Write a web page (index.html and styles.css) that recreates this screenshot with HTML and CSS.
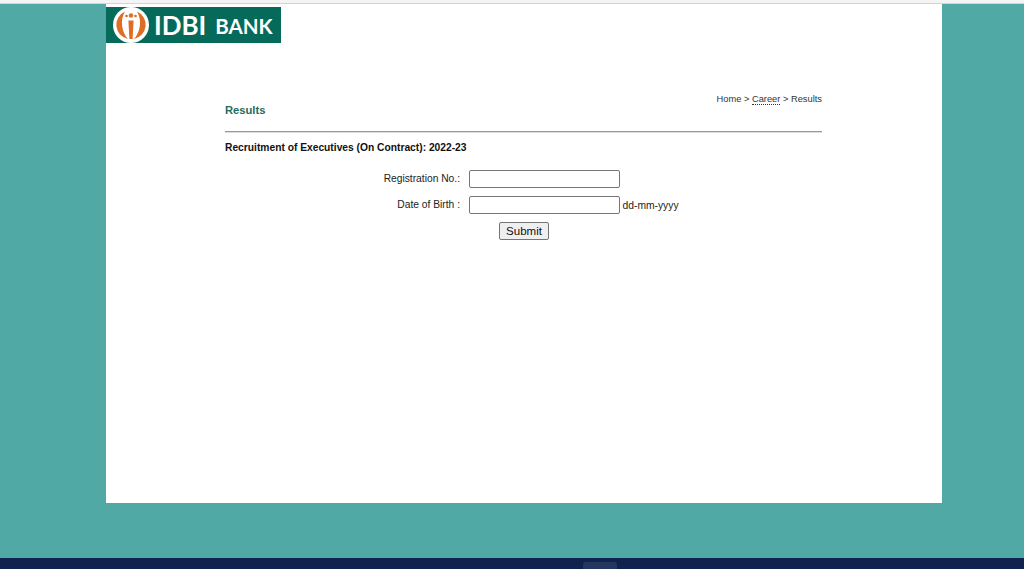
FILE: index.html
```html
<!DOCTYPE html>
<html>
<head>
  <title>IDBI Bank - Results</title>
  <link rel="stylesheet" href="styles.css">
</head>
<body>
  <div class="top-line"></div>

  <div class="wrapper">
    <div class="logo">
      <svg class="logo-mark" width="38" height="36" viewBox="0 0 38 36">
        <circle cx="19" cy="18" r="18" fill="#fff"/>
        <path d="M13 4.5 A14.5 14.5 0 0 0 16 32 C10 26 7.5 13 13 4.5 Z" fill="#dd6e26"/>
        <path d="M25 4.5 A14.5 14.5 0 0 1 22 32 C28 26 30.5 13 25 4.5 Z" fill="#dd6e26"/>
        <circle cx="19" cy="8.5" r="2.2" fill="#dd6e26"/>
        <circle cx="14.5" cy="9" r="1.3" fill="#dd6e26"/>
        <circle cx="23.5" cy="9" r="1.3" fill="#dd6e26"/>
        <path d="M16.4 13.5 H21.6 L20.6 32 H17.4 Z" fill="#dd6e26"/>
      </svg>
      <span class="logo-idbi">IDBI</span>
      <span class="logo-bank">BANK</span>
    </div>

    <div class="content">
      <div class="title-row">
        <h1>Results</h1>
        <div class="breadcrumb">Home &gt; <a href="#">Career</a> &gt; Results</div>
      </div>
      <hr>
      <h2>Recruitment of Executives (On Contract): 2022-23</h2>

      <form class="result-form">
        <div class="form-row">
          <label>Registration No.:</label>
          <input type="text">
        </div>
        <div class="form-row">
          <label>Date of Birth :</label>
          <input type="text">
          <span class="hint">dd-mm-yyyy</span>
        </div>
        <div class="submit-row">
          <button type="button">Submit</button>
        </div>
      </form>
    </div>
  </div>

  <div class="footer-bar">
    <div class="footer-tab"></div>
  </div>
</body>
</html>
```

FILE: styles.css
```css
html, body {
  height: 100%;
}

body {
  font-family: "Liberation Sans", Arial, sans-serif;
  font-size: 12px;
  color: #222;
  background-color: #51a9a5;
  margin: 0;
  display: flex;
  flex-direction: column;
  overflow: hidden;
}

.top-line {
  height: 3px;
  background-color: #f4f4f4;
  border-bottom: 1px solid #d4d4d4;
}

.wrapper {
  width: 836px;
  height: 499px;
  margin: 0 auto 0 106px;
  background-color: #fff;
  padding-top: 3px;
  box-sizing: border-box;
}

.logo {
  width: 175px;
  height: 36px;
  background-color: #066a5a;
  display: flex;
  align-items: center;
  color: #fff;
}

.logo-mark {
  margin-left: 6px;
}

.logo-idbi {
  font-family: Lato, sans-serif;
  font-size: 26px;
  font-weight: bold;
  margin-left: 4px;
}

.logo-bank {
  font-family: Lato, sans-serif;
  font-size: 20.5px;
  font-weight: bold;
  margin: 2px 0 0 9px;
}

.content {
  width: 597px;
  margin: 50px 0 0 119px;
}

.title-row {
  display: flex;
  justify-content: space-between;
  height: 38px;
}

h1 {
  font-size: 11.2px;
  font-weight: bold;
  color: #1f6b5e;
  margin: 11px 0 0;
}

.breadcrumb {
  font-size: 9.3px;
  color: #333;
  margin-top: 1px;
}

.breadcrumb a {
  color: #333;
  text-decoration: none;
  border-bottom: 1px dotted #333;
}

hr {
  border: none;
  border-top: 1px solid #999;
  border-bottom: 1px solid #ddd;
  margin: 0;
}

h2 {
  font-size: 10.25px;
  font-weight: bold;
  color: #111;
  margin: 9px 0 0;
}

.result-form {
  margin-top: 13px;
}

.form-row {
  display: flex;
  align-items: center;
  height: 26px;
}

.form-row label {
  width: 235px;
  text-align: right;
  font-size: 10.25px;
  margin: 0 8.5px 2px 0;
}

.form-row input {
  width: 151px;
  height: 18px;
  box-sizing: border-box;
  border: 1px solid #767676;
  border-radius: 2px;
  padding: 0;
}

.hint {
  font-size: 10.3px;
  margin-left: 3px;
}

.submit-row {
  margin: 4px 0 0 274px;
}

.submit-row button {
  font-family: "Liberation Sans", Arial, sans-serif;
  font-size: 11.5px;
  width: 50px;
  height: 18px;
  padding: 0;
  color: #111;
  background-color: #efefef;
  border: 1px solid #767676;
  border-radius: 2px;
}

.footer-bar {
  margin-top: auto;
  height: 11px;
  background-color: #10234f;
  display: flex;
  justify-content: center;
  align-items: flex-end;
}

.footer-tab {
  width: 34px;
  height: 7px;
  margin-left: 176px;
  background-color: #26375f;
  border-radius: 3px 3px 0 0;
}
```
